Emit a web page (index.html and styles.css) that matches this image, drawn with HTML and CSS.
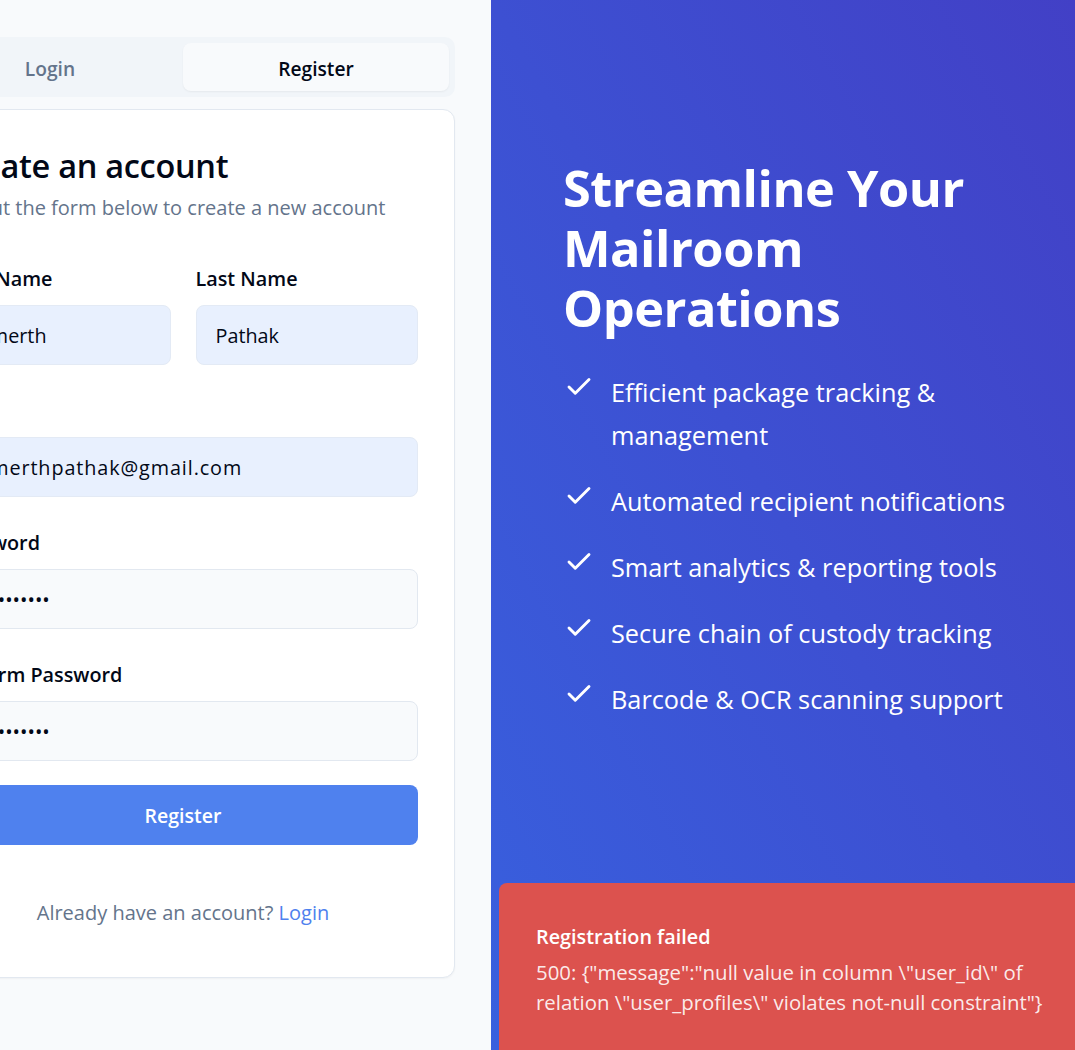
FILE: index.html
```html
<!DOCTYPE html>
<html lang="en">
<head>
<meta charset="utf-8">
<title>Register</title>
<link rel="stylesheet" href="styles.css">
</head>
<body>
<div class="page">
  <main class="left">
    <div class="auth">
      <div class="tabs">
        <button class="tab">Login</button>
        <button class="tab active">Register</button>
      </div>
      <section class="card">
        <h1 class="title">Create an account</h1>
        <p class="subtitle">Fill out the form below to create a new account</p>
        <form class="form">
          <div class="row">
            <div class="field">
              <label class="label">First Name</label>
              <input class="input filled" type="text" value="Samerth">
            </div>
            <div class="field">
              <label class="label">Last Name</label>
              <input class="input filled" type="text" value="Pathak">
            </div>
          </div>
          <div class="field">
            <label class="label">Email</label>
            <input class="input filled email" type="email" value="samerthpathak@gmail.com">
          </div>
          <div class="field">
            <label class="label">Password</label>
            <input class="input" type="password" value="password123">
          </div>
          <div class="field">
            <label class="label">Confirm Password</label>
            <input class="input" type="password" value="password123">
          </div>
          <button type="button" class="submit">Register</button>
        </form>
        <p class="footer">Already have an account? <a class="link" href="#">Login</a></p>
      </section>
    </div>
  </main>
  <aside class="hero">
    <div class="hero-inner">
      <h2 class="hero-title">Streamline Your Mailroom Operations</h2>
      <ul class="features">
        <li class="feature"><svg class="check" viewBox="0 0 24 24"><path d="M20 6 9 17l-5-5"/></svg><span>Efficient package tracking &amp; management</span></li>
        <li class="feature"><svg class="check" viewBox="0 0 24 24"><path d="M20 6 9 17l-5-5"/></svg><span>Automated recipient notifications</span></li>
        <li class="feature"><svg class="check" viewBox="0 0 24 24"><path d="M20 6 9 17l-5-5"/></svg><span>Smart analytics &amp; reporting tools</span></li>
        <li class="feature"><svg class="check" viewBox="0 0 24 24"><path d="M20 6 9 17l-5-5"/></svg><span>Secure chain of custody tracking</span></li>
        <li class="feature"><svg class="check" viewBox="0 0 24 24"><path d="M20 6 9 17l-5-5"/></svg><span>Barcode &amp; OCR scanning support</span></li>
      </ul>
    </div>
  </aside>
</div>
<div class="toast">
  <div class="toast-title">Registration failed</div>
  <div class="toast-msg">500: {"message":"null value in column \"user_id\" of relation \"user_profiles\" violates not-null constraint"}</div>
</div>
</body>
</html>
```
FILE: styles.css
```css
* { box-sizing: border-box; }
html, body { margin: 0; padding: 0; }
body {
  font-family: "Open Sans", "Noto Sans", sans-serif;
  color: #0f172a;
  background: #f8fafc;
  overflow: hidden;
  height: 1050px;
}
.page {
  display: grid;
  grid-template-columns: 491px 1fr;
  height: 1050px;
}
.left {
  background: #f8fafc;
  overflow: hidden;
}
.auth {
  width: 544px;
  margin-left: -89px;
  margin-top: 37px;
}
.tabs {
  display: grid;
  grid-template-columns: 1fr 1fr;
  background: #f1f5f9;
  border-radius: 10px;
  padding: 6px;
  height: 60px;
}
.tab {
  border: 0;
  background: transparent;
  font: 600 19.2px/28px "Open Sans", sans-serif;
  color: #64748b;
  border-radius: 8px;
  height: 48px;
  padding: 4px 0 0;
}
.tab.active {
  background: #f8fafc;
  color: #020817;
  box-shadow: 0 1px 2px rgba(0,0,0,0.05);
}
.card {
  margin-top: 12px;
  background: #fff;
  border: 1px solid #e2e8f0;
  border-radius: 12px;
  padding: 36px 36px 50px;
  box-shadow: 0 1px 2px rgba(0,0,0,0.04);
}
.title {
  margin: 0;
  font-size: 32.5px;
  line-height: 40px;
  font-weight: 600;
  letter-spacing: -0.3px;
  color: #020817;
}
.subtitle {
  margin: 8px 0 0;
  font-size: 20px;
  line-height: 28px;
  color: #64748b;
}
.form {
  margin-top: 43px;
  display: flex;
  flex-direction: column;
  gap: 32px;
}
.row {
  display: grid;
  grid-template-columns: minmax(0, 1fr) minmax(0, 1fr);
  gap: 25px;
}
.field {
  display: flex;
  flex-direction: column;
  gap: 12px;
  min-width: 0;
}
.label {
  font-size: 19.8px;
  line-height: 28px;
  font-weight: 600;
  color: #020817;
}
.input {
  width: 100%;
  min-width: 0;
  height: 60px;
  border: 1px solid #e2e8f0;
  border-radius: 8px;
  background: #f8fafc;
  padding: 0 19px;
  font: 19.8px "Open Sans", sans-serif;
  color: #020817;
  outline: none;
}
.input.filled {
  background: #e8f0fe;
  border-color: #e3eaf5;
}
.input.email {
  letter-spacing: 0.9px;
}
.submit {
  margin-top: -8px;
  height: 60px;
  border: 0;
  border-radius: 8px;
  background: #4f81ee;
  color: #fff;
  font: 600 19.5px "Open Sans", sans-serif;
}
.footer {
  margin: 54px 0 0;
  text-align: center;
  font-size: 20px;
  line-height: 28px;
  color: #64748b;
}
.link {
  color: #4f81ee;
  text-decoration: none;
  font-weight: 500;
}
.hero {
  background: linear-gradient(to top right, #3860de, #4240c6);
  color: #fff;
  padding: 158px 40px 0 72px;
}
.hero-title {
  margin: 0;
  font-size: 50.5px;
  line-height: 60px;
  font-weight: 700;
  letter-spacing: -0.5px;
  max-width: 440px;
}
.features {
  list-style: none;
  margin: 33px 0 0;
  padding: 0;
  display: flex;
  flex-direction: column;
  gap: 23px;
}
.feature {
  display: flex;
  align-items: flex-start;
  gap: 17px;
  font-size: 25.3px;
  line-height: 43px;
}
.check {
  flex: none;
  width: 30px;
  height: 30px;
  margin-top: 1px;
  margin-left: 1px;
  fill: none;
  stroke: #fff;
  stroke-width: 2.3;
  stroke-linecap: round;
  stroke-linejoin: round;
}
.toast {
  position: absolute;
  left: 499px;
  top: 883px;
  width: 620px;
  height: 200px;
  background: #dc524e;
  border-radius: 8px;
  padding: 39px 37px;
  color: #fff;
}
.toast-title {
  font-size: 19.8px;
  line-height: 30px;
  font-weight: 600;
}
.toast-msg {
  margin-top: 5px;
  max-width: 530px;
  font-size: 20.4px;
  line-height: 30px;
  color: rgba(255,255,255,0.9);
}
```
